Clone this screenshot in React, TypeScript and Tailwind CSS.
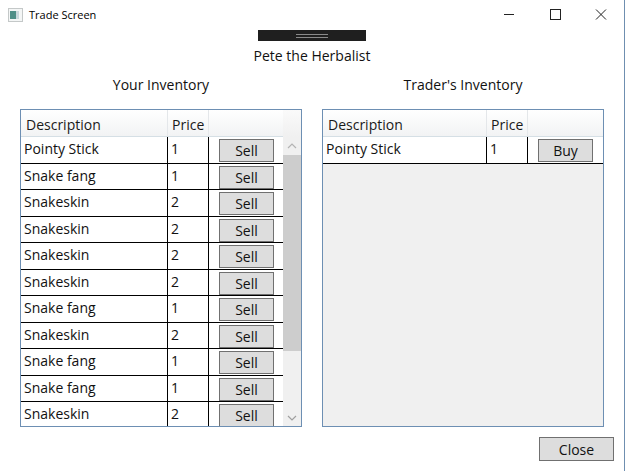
const yourItems = [
  { name: "Pointy Stick", price: 1 },
  { name: "Snake fang", price: 1 },
  { name: "Snakeskin", price: 2 },
  { name: "Snakeskin", price: 2 },
  { name: "Snakeskin", price: 2 },
  { name: "Snakeskin", price: 2 },
  { name: "Snake fang", price: 1 },
  { name: "Snakeskin", price: 2 },
  { name: "Snake fang", price: 1 },
  { name: "Snake fang", price: 1 },
  { name: "Snakeskin", price: 2 },
]

const traderItems = [{ name: "Pointy Stick", price: 1 }]

function GridHeader({ descWidth }: { descWidth: string }) {
  return (
    <div className="flex h-[27px] shrink-0 border-b border-[#d5dfe5] bg-gradient-to-b from-white to-[#f2f3f4] text-[14px] text-[#1a1a1a]">
      <div className={`${descWidth} shrink-0 border-r border-[#e4e7ea] pl-[5px] pt-[4px]`}>Description</div>
      <div className="w-[41px] shrink-0 border-r border-[#e4e7ea] pl-[4px] pt-[4px]">Price</div>
      <div className="flex-1" />
    </div>
  )
}

function Row({ name, price, label, descWidth }: { name: string; price: number; label: string; descWidth: string }) {
  return (
    <div className="flex h-[26.55px] shrink-0 border-b border-black bg-white text-[14px] text-[#111]">
      <div className={`${descWidth} shrink-0 border-r border-black pl-[3px] leading-[24px]`}>{name}</div>
      <div className="w-[41px] shrink-0 border-r border-black pl-[3px] leading-[24px]">{price}</div>
      <div className="flex-1">
        <button className="ml-[10px] mt-[2px] block h-[23px] w-[55px] border border-[#707070] bg-[#dddddd] text-center text-[14px] leading-[21px] text-[#111]">
          {label}
        </button>
      </div>
    </div>
  )
}

function Scrollbar() {
  return (
    <div className="flex w-[18px] shrink-0 flex-col bg-[#f0f0f0]">
      <div className="h-[27px] bg-gradient-to-b from-[#fafafa] to-[#f0f0f0]" />
      <div className="flex h-[18px] items-center justify-center">
        <svg width="10" height="6" viewBox="0 0 10 6" fill="none" stroke="#b4b4b4" strokeWidth="1.2">
          <path d="M1 5l4-4 4 4" />
        </svg>
      </div>
      <div className="h-[196px] bg-[#cdcdcd]" />
      <div className="flex-1" />
      <div className="flex h-[17px] items-center justify-center">
        <svg width="10" height="6" viewBox="0 0 10 6" fill="none" stroke="#a0a0a0" strokeWidth="1.2">
          <path d="M1 1l4 4 4-4" />
        </svg>
      </div>
    </div>
  )
}

export default function App() {
  return (
    <div
      className="flex h-[471px] w-[625px] flex-col overflow-hidden border-r border-[#6f8fb0] bg-white text-[#111]"
      style={{ fontFamily: '"Open Sans", "Noto Sans", sans-serif' }}
    >
      {/* Title bar */}
      <div className="flex h-[30px] shrink-0 items-center pl-[8px]">
        <svg width="15" height="14" viewBox="0 0 15 14" className="mr-[6px]">
          <rect x="0.5" y="0.5" width="14" height="13" fill="#f4f6f6" stroke="#c4c8c8" />
          <rect x="2" y="3" width="6" height="8" fill="#4f8f88" />
          <rect x="8" y="3" width="3" height="8" fill="#c9d8dc" />
        </svg>
        <span className="text-[11px] text-black">Trade Screen</span>
        <div className="ml-auto flex h-full items-center">
          <svg width="46" height="30" viewBox="0 0 46 30" stroke="#222" fill="none">
            <path d="M18 14.5h10" />
          </svg>
          <svg width="46" height="30" viewBox="0 0 46 30" stroke="#222" fill="none">
            <rect x="18.5" y="9.5" width="10" height="10" />
          </svg>
          <svg width="46" height="30" viewBox="0 0 46 30" stroke="#222" fill="none">
            <path d="M18 9.5l10 10M28 9.5l-10 10" />
          </svg>
        </div>
      </div>

      {/* Trader name */}
      <div className="flex shrink-0 flex-col items-center">
        <div className="flex h-[11px] w-[108px] items-center justify-center bg-[#1f1f1f]">
          <div className="h-[4px] w-[32px] border-y border-[#8a8a8a]" />
        </div>
        <div className="mt-[4px] h-[22px] text-[14px] leading-[22px]">Pete the Herbalist</div>
      </div>

      {/* Inventories */}
      <div className="mt-[7px] flex flex-1 gap-[20px] px-[20px]">
        <div className="flex w-[282px] flex-col">
          <div className="h-[35px] text-center text-[14px] leading-[22px]">Your Inventory</div>
          <div className="flex h-[318px] border border-[#6d8fb3] bg-[#f0f0f0]">
            <div className="flex min-w-0 flex-1 flex-col overflow-hidden">
              <GridHeader descWidth="w-[147px]" />
              {yourItems.map((item, i) => (
                <Row key={i} name={item.name} price={item.price} label="Sell" descWidth="w-[147px]" />
              ))}
            </div>
            <Scrollbar />
          </div>
        </div>

        <div className="flex w-[282px] flex-col">
          <div className="h-[35px] text-center text-[14px] leading-[22px]">Trader's Inventory</div>
          <div className="flex h-[318px] flex-col border border-[#6d8fb3] bg-[#f0f0f0]">
            <GridHeader descWidth="w-[164px]" />
            {traderItems.map((item, i) => (
              <Row key={i} name={item.name} price={item.price} label="Buy" descWidth="w-[164px]" />
            ))}
          </div>
        </div>
      </div>

      {/* Footer */}
      <div className="flex justify-end pb-[10px] pr-[10px]">
        <button className="h-[24px] w-[75px] border border-[#707070] bg-[#dddddd] text-center text-[14px] leading-[23px] text-[#111]">
          Close
        </button>
      </div>
    </div>
  )
}
